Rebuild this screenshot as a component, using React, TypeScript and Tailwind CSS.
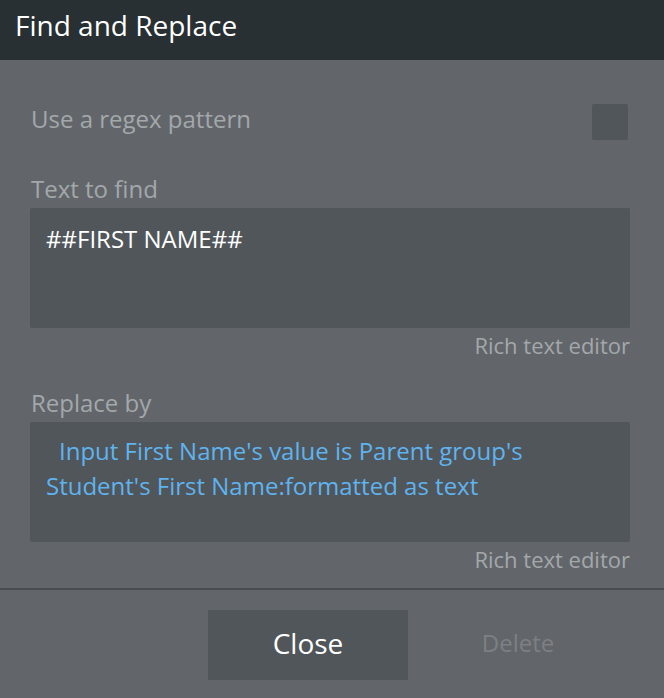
import React from "react";

export default function App() {
  return (
    <div className="w-[664px] h-[698px] bg-[#62666a] overflow-hidden" style={{ fontFamily: '"Open Sans", "Liberation Sans", sans-serif' }}>
      <div className="h-[60px] bg-[#283033] px-[15px] pb-[10px] flex items-center text-[28px] text-white">
        Find and Replace
      </div>
      <div className="pl-[30px] pr-[34px]">
        <div className="mt-[44px] h-[36px] flex items-center justify-between">
          <span className="pl-[1px] pb-[6px] text-[24px] text-[#a3a8ab]">Use a regex pattern</span>
          <div className="w-[36px] h-[36px] mr-[2px] rounded-[2px] bg-[#51565a]" />
        </div>
        <div className="mt-[35px] pl-[1px] h-[28px] leading-[28px] text-[24px] text-[#a3a8ab]">Text to find</div>
        <div className="mt-[5px] h-[120px] rounded-[2px] bg-[#51565a] px-[16px] pt-[13px] text-[24px] leading-[35px] text-white">
          ##FIRST NAME##
        </div>
        <div className="mt-[3px] h-[28px] leading-[28px] text-right text-[22px] text-[#a3a8ab]">Rich text editor</div>
        <div className="mt-[30px] pl-[1px] h-[28px] leading-[28px] text-[24px] text-[#a3a8ab]">Replace by</div>
        <div className="mt-[5px] h-[120px] rounded-[2px] bg-[#51565a] px-[16px] pt-[11px] text-[24px] leading-[35px] text-[#5fb3ef] indent-[13px]">
          Input First Name's value is Parent group's Student's First Name:formatted as text
        </div>
        <div className="mt-[3px] h-[28px] leading-[28px] text-right text-[22px] text-[#a3a8ab]">Rich text editor</div>
      </div>
      <div className="mt-[15px] h-[2px] bg-[#4a4d50]" />
      <div className="pt-[20px] pl-[208px] flex gap-[10px]">
        <div className="w-[200px] h-[70px] pb-[4px] bg-[#51565a] flex items-center justify-center text-[28px] text-white">Close</div>
        <div className="w-[200px] h-[70px] pb-[4px] flex items-center justify-center text-[24px] text-[#7c8084]">Delete</div>
      </div>
    </div>
  );
}
